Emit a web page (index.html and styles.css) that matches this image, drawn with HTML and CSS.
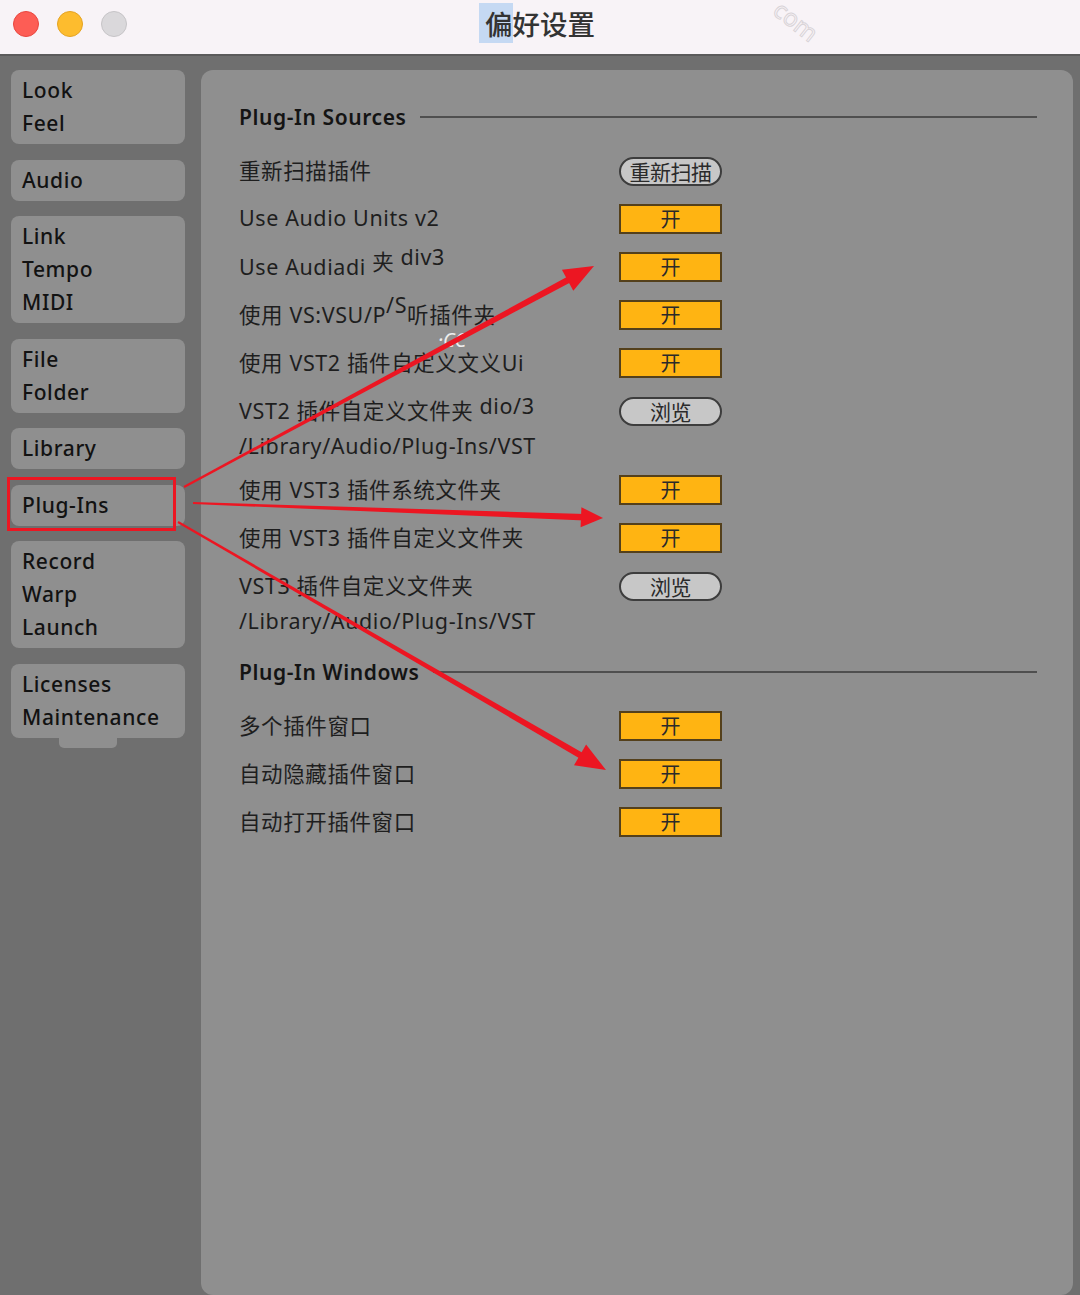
FILE: index.html
```html
<!DOCTYPE html>
<html lang="zh">
<head>
    <meta charset="UTF-8">
    <meta name="viewport" content="width=device-width, initial-scale=1.0">
    <title>偏好设置</title>
    <link rel="stylesheet" href="styles.css">
</head>
<body>
<div class="titlebar">
    <div class="lights">
        <span class="light red"></span>
        <span class="light yellow"></span>
        <span class="light grey"></span>
    </div>
    <div class="title"><span class="sel">偏</span>好设置</div>
    <div class="mark">com</div>
</div>

<div class="window">
    <div class="sidebar">
        <div class="group">Look<br>Feel</div>
        <div class="group">Audio</div>
        <div class="group">Link<br>Tempo<br>MIDI</div>
        <div class="group">File<br>Folder</div>
        <div class="group">Library</div>
        <div class="group">Plug-Ins</div>
        <div class="group">Record<br>Warp<br>Launch</div>
        <div class="group tabbed">Licenses<br>Maintenance</div>
    </div>

    <div class="main">
        <div class="section-head">Plug-In Sources</div>
        <div class="row"><span class="label">重新扫描插件</span><span class="pill">重新扫描</span></div>
        <div class="row"><span class="label">Use Audio Units v2</span><span class="toggle">开</span></div>
        <div class="row"><span class="label">Use Audiadi <span class="up1">夹</span> <span class="up2">div3</span></span><span class="toggle">开</span></div>
        <div class="row"><span class="label">使用 VS:VSU/P<span class="up2">/S</span>听插件夹</span><span class="toggle">开</span></div>
        <div class="row"><span class="label">使用 VST2 插件自定义文义Ui</span><span class="toggle">开</span></div>
        <div class="row"><span class="label">VST2 插件自定义文件夹 <span class="up1">dio/3</span></span><span class="pill">浏览</span></div>
        <div class="path">/Library/Audio/Plug-Ins/VST</div>
        <div class="row"><span class="label">使用 VST3 插件系统文件夹</span><span class="toggle">开</span></div>
        <div class="row"><span class="label">使用 VST3 插件自定义文件夹</span><span class="toggle">开</span></div>
        <div class="row"><span class="label">VST3 插件自定义文件夹</span><span class="pill">浏览</span></div>
        <div class="path">/Library/Audio/Plug-Ins/VST</div>

        <div class="section-head second">Plug-In Windows</div>
        <div class="row"><span class="label">多个插件窗口</span><span class="toggle">开</span></div>
        <div class="row"><span class="label">自动隐藏插件窗口</span><span class="toggle">开</span></div>
        <div class="row"><span class="label">自动打开插件窗口</span><span class="toggle">开</span></div>
    </div>
</div>

<div class="cc">·CC</div>

<!-- 标注层：红框和箭头 -->
<svg class="annot" width="1080" height="1295" viewBox="0 0 1080 1295">
    <rect x="8.5" y="478.5" width="166" height="51" fill="none" stroke="#ec1622" stroke-width="3"/>
    <g id="arrows" fill="#ec1622"></g>
</svg>

<script>
    const arrows = [
        { from: [184, 487], to: [594, 266], head: 30, half: 12 },
        { from: [193, 503], to: [603, 518], head: 22, half: 10 },
        { from: [178, 522], to: [606, 770], head: 30, half: 12 }
    ];
    const group = document.getElementById('arrows');

    function pt(x, y) { return x.toFixed(1) + ',' + y.toFixed(1); }

    arrows.forEach(a => {
        const [x1, y1] = a.from;
        const [x2, y2] = a.to;
        const len = Math.hypot(x2 - x1, y2 - y1);
        const ux = (x2 - x1) / len, uy = (y2 - y1) / len;
        const nx = -uy, ny = ux;
        const bx = x2 - ux * a.head, by = y2 - uy * a.head;
        const w0 = 1, w1 = 3.2;

        const shaft = document.createElementNS('http://www.w3.org/2000/svg', 'polygon');
        shaft.setAttribute('points', [
            pt(x1 + nx * w0, y1 + ny * w0),
            pt(bx + ux * 4 + nx * w1, by + uy * 4 + ny * w1),
            pt(bx + ux * 4 - nx * w1, by + uy * 4 - ny * w1),
            pt(x1 - nx * w0, y1 - ny * w0)
        ].join(' '));
        group.appendChild(shaft);

        const head = document.createElementNS('http://www.w3.org/2000/svg', 'polygon');
        head.setAttribute('points', [
            pt(x2, y2),
            pt(bx + nx * a.half, by + ny * a.half),
            pt(bx - nx * a.half, by - ny * a.half)
        ].join(' '));
        group.appendChild(head);
    });
</script>
</body>
</html>
```

FILE: styles.css
```css
body {
    margin: 0;
    width: 1080px;
    height: 1295px;
    overflow: hidden;
    position: relative;
    background: #6f6f6f;
    font-family: "Noto Sans", "Noto Sans CJK SC", sans-serif;
    color: #1c1c1c;
}

/* 标题栏 */
.titlebar {
    height: 54px;
    background: #f8f3f7;
    border-bottom: 2px solid #5b5b5b;
    display: grid;
    grid-template-columns: 1fr auto 1fr;
    align-items: start;
    position: relative;
}
.lights { display: flex; gap: 18px; padding: 11px 0 0 13px; }
.light { width: 26px; height: 26px; border-radius: 50%; box-sizing: border-box; }
.light.red { background: #fd5d55; border: 1px solid #e9453e; }
.light.yellow { background: #fdbc2e; border: 1px solid #e5a321; }
.light.grey { background: #dad8db; border: 1px solid #c6c4c7; }
.title {
    font-family: "Noto Sans CJK SC", sans-serif;
    font-size: 27.5px;
    font-weight: 500;
    color: #333;
    padding-top: 4px;
    line-height: 38px;
}
.title .sel { background: #c5d9f3; padding-left: 6px; margin-left: -6px; }
.mark {
    position: absolute;
    left: 772px;
    top: 9px;
    font-size: 24px;
    line-height: 24px;
    color: transparent;
    -webkit-text-stroke: 1px #d8d4d8;
    transform: rotate(38deg);
}

/* 主体 */
.window {
    display: flex;
    gap: 16px;
    padding: 14px 7px 0 11px;
    height: 1239px;
    box-sizing: border-box;
}
.sidebar { width: 174px; flex: none; display: flex; flex-direction: column; gap: 15.5px; }
.group {
    background: #8f8f8f;
    border-radius: 8px;
    padding: 4px 11px;
    font-size: 21px;
    line-height: 33px;
    font-weight: 500;
    color: #121212;
    letter-spacing: 0.6px;
}
.group.tabbed { position: relative; }
.group.tabbed::after {
    content: "";
    position: absolute;
    left: 48px;
    bottom: -10px;
    width: 58px;
    height: 10px;
    background: #8f8f8f;
    border-radius: 0 0 5px 5px;
}

.main {
    flex: 1;
    background: #8f8f8f;
    border-radius: 12px;
    padding: 23px 36px 0 38px;
    font-size: 21.5px;
    letter-spacing: 0.6px;
}
.section-head {
    display: flex;
    align-items: center;
    gap: 13px;
    height: 48px;
    margin-bottom: 6px;
    font-weight: 600;
    font-size: 21px;
    color: #141414;
}
.section-head::after { content: ""; flex: 1; height: 2px; background: #4f4f4f; }
.section-head.second { margin-top: 7px; }

.row { display: flex; align-items: center; height: 48px; }
.label { width: 380px; flex: none; color: #1e1e1e; white-space: nowrap; margin-top: -3px; }
.up1 { position: relative; top: -5px; }
.up2 { position: relative; top: -10px; }
.path { height: 31px; line-height: 22px; color: #1e1e1e; }

.toggle {
    width: 99px;
    height: 26px;
    line-height: 26px;
    border: 2px solid #54401b;
    background: #ffb412;
    text-align: center;
    font-family: "Noto Sans CJK SC", sans-serif;
    font-size: 20px;
    letter-spacing: 0;
    color: #2a2a2a;
}
.pill {
    width: 99px;
    height: 25px;
    line-height: 25px;
    border: 2px solid #3d3d3d;
    border-radius: 15px;
    background: #c7c7c7;
    text-align: center;
    font-family: "Noto Sans CJK SC", sans-serif;
    font-size: 21px;
    color: #2a2a2a;
    letter-spacing: -0.5px;
}

/* 水印与标注 */
.cc {
    position: absolute;
    left: 438px;
    top: 326px;
    font-size: 20px;
    color: #eeeeee;
    font-style: italic;
}
.annot { position: absolute; left: 0; top: 0; pointer-events: none; }
```
